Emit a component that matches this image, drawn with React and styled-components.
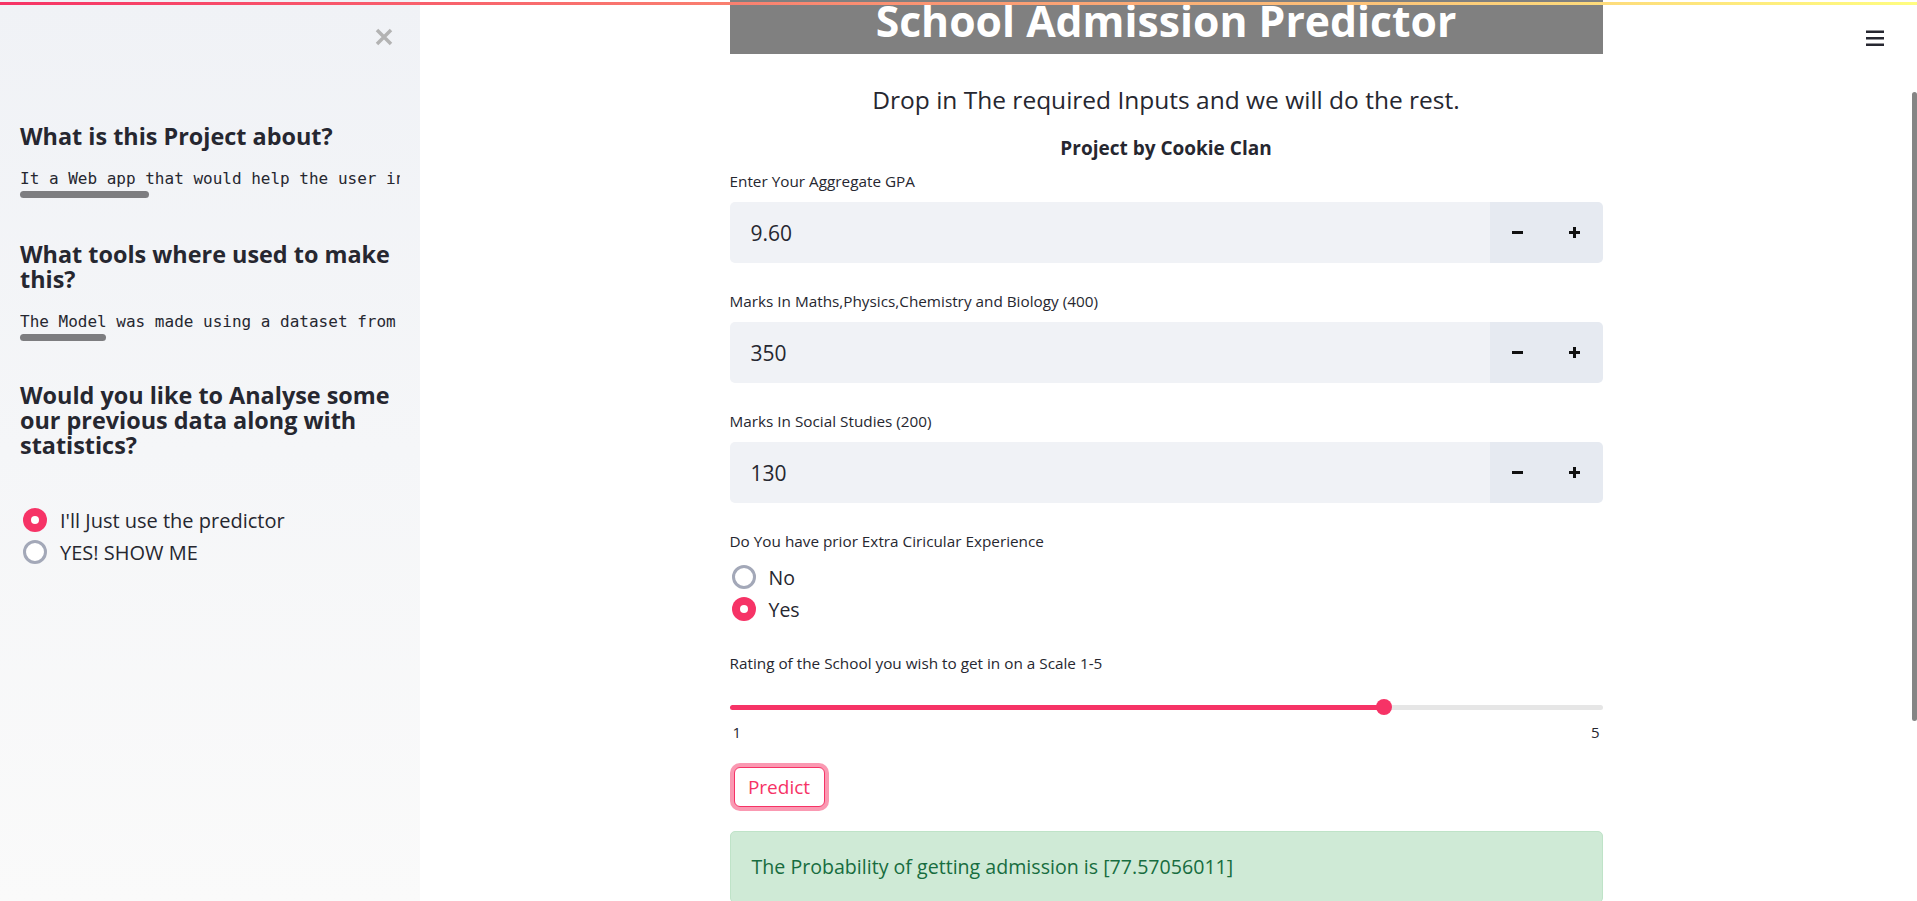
import React, { useState } from "react";
import styled, { createGlobalStyle } from "styled-components";

const GlobalStyle = createGlobalStyle`
  html, body {
    margin: 0;
    padding: 0;
    height: 100%;
    overflow: hidden;
    background: #ffffff;
  }
  body {
    font-family: "Open Sans", Roboto, "Liberation Sans", sans-serif;
    color: #262730;
  }
  * { box-sizing: border-box; }
  input, button { font-family: inherit; }
`;

const Page = styled.div`
  position: relative;
  display: flex;
  height: 100vh;
  overflow: hidden;
`;

const Decoration = styled.div`
  position: absolute;
  top: 2px;
  left: 0;
  right: 0;
  height: 3px;
  background-image: linear-gradient(90deg, #f63366, #fffd80);
  z-index: 5;
`;

/* ---------- sidebar ---------- */

const Sidebar = styled.aside`
  flex: 0 0 420px;
  width: 420px;
  min-width: 0;
  display: flex;
  flex-direction: column;
  padding: 28px 20px 0;
  background-image: linear-gradient(180deg, #f0f2f6, #fafafa);
`;

const CloseRow = styled.div`
  display: flex;
  justify-content: flex-end;
  padding-right: 7px;
  height: 18px;
`;

const SideHeading = styled.h2`
  margin: ${({ $top }) => $top}px 0 0;
  font-size: 23.4px;
  line-height: 25px;
  font-weight: 700;
  color: #262730;
`;

const Code = styled.pre`
  margin: 19px 0 0;
  min-width: 0;
  font-family: "DejaVu Sans Mono", "Liberation Mono", monospace;
  font-size: 16px;
  line-height: 22px;
  white-space: pre;
  overflow: hidden;
  color: #262730;
`;

const CodeThumb = styled.div`
  margin-top: 1px;
  height: 7px;
  width: ${({ $w }) => $w}px;
  border-radius: 4px;
  background: #7d7d80;
`;

/* ---------- main ---------- */

const Main = styled.main`
  position: relative;
  flex: 1;
  display: flex;
  min-width: 0;
`;

const MainBody = styled.div`
  flex: 1;
  display: flex;
  justify-content: center;
  align-items: flex-start;
  overflow: hidden;
`;

const Column = styled.div`
  flex: none;
  width: 873px;
  display: flex;
  flex-direction: column;
`;

const ScrollTrack = styled.div`
  flex: 0 0 5px;
`;

const ScrollThumb = styled.div`
  margin-top: 92px;
  height: 629px;
  background: #858585;
  border-radius: 3px;
`;

const MenuButton = styled.button`
  position: absolute;
  top: 30px;
  right: 33px;
  width: 18px;
  height: 16px;
  padding: 0;
  border: 0;
  background: transparent;
  cursor: pointer;
`;

const TitleBar = styled.h1`
  margin: 0;
  height: 54px;
  padding-bottom: 13px;
  background: #808080;
  color: #ffffff;
  text-align: center;
  font-size: 42.7px;
  line-height: 41px;
  font-weight: 700;
`;

const Subtitle = styled.p`
  margin: 31px 0 0;
  text-align: center;
  font-size: 24.5px;
  line-height: 30px;
`;

const Byline = styled.p`
  margin: 21px 0 0;
  text-align: center;
  font-size: 19px;
  line-height: 24px;
  font-weight: 700;
`;

const FieldLabel = styled.label`
  display: block;
  margin-top: ${({ $top }) => $top}px;
  font-size: 15.3px;
  line-height: 20px;
  color: #262730;
`;

const NumberBox = styled.div`
  margin-top: 11px;
  height: 61px;
  display: flex;
  border-radius: 5px;
  overflow: hidden;
`;

const NumberValue = styled.input`
  flex: 1;
  min-width: 0;
  border: 0;
  outline: none;
  background: #f0f2f6;
  padding: 0 0 0 21px;
  font-size: 21px;
  color: #262730;
`;

const Stepper = styled.div`
  flex: 0 0 113px;
  display: flex;
  background: #e6eaf1;
`;

const StepButton = styled.button`
  flex: 1;
  border: 0;
  padding: 0;
  background: transparent;
  display: flex;
  align-items: center;
  justify-content: center;
  cursor: pointer;
`;

const RadioList = styled.div`
  margin-top: ${({ $top }) => $top}px;
  padding-left: ${({ $inset }) => $inset}px;
  display: flex;
  flex-direction: column;
`;

const RadioRow = styled.label`
  display: flex;
  align-items: center;
  gap: 13px;
  height: 32px;
  font-size: ${({ $size }) => $size}px;
  color: #262730;
  cursor: pointer;
`;

const RadioDot = styled.span`
  flex: none;
  width: 24px;
  height: 24px;
  border-radius: 50%;
  display: flex;
  align-items: center;
  justify-content: center;
  background: ${({ $on }) => ($on ? "#f63366" : "#ffffff")};
  border: ${({ $on }) => ($on ? "none" : "3px solid #a3a8b8")};

  &::after {
    content: "";
    display: ${({ $on }) => ($on ? "block" : "none")};
    width: 8px;
    height: 8px;
    border-radius: 50%;
    background: #ffffff;
  }
`;

const SliderRow = styled.div`
  margin-top: 26px;
  height: 16px;
  display: flex;
  align-items: center;
`;

const SliderFill = styled.div`
  flex: none;
  height: 5px;
  background: #f63366;
  border-radius: 3px 0 0 3px;
`;

const SliderKnob = styled.div`
  position: relative;
  flex: none;
  width: 16px;
  height: 16px;
  margin: 0 -8px;
  border-radius: 50%;
  background: #f63366;
  z-index: 1;
`;

const SliderRest = styled.div`
  flex: 1;
  height: 5px;
  background: #e6e6e6;
  border-radius: 0 3px 3px 0;
`;

const TickRow = styled.div`
  margin-top: 7px;
  display: flex;
  justify-content: space-between;
  font-size: 15px;
  line-height: 20px;
  padding: 0 3px;
`;

const PredictButton = styled.button`
  align-self: flex-start;
  margin: 25px 0 0 4px;
  width: 91px;
  height: 40px;
  padding: 0;
  border: 1px solid #f63366;
  border-radius: 6px;
  background: #ffffff;
  color: #f63366;
  font-size: 19px;
  box-shadow: 0 0 0 4px rgba(246, 51, 102, 0.5);
  cursor: pointer;
`;

const SuccessBox = styled.div`
  margin-top: 24px;
  padding: 23px 21px;
  background: #cfead6;
  border: 1px solid #bfe3c8;
  border-radius: 5px;
  color: #176d3f;
  font-size: 19.6px;
  line-height: 24px;
`;

const CloseIcon = () => (
  <svg width="18" height="18" viewBox="0 0 18 18">
    <path d="M2 2 L16 16 M16 2 L2 16" stroke="#b3b3b3" strokeWidth="3.5" />
  </svg>
);

const MenuIcon = () => (
  <svg width="18" height="16" viewBox="0 0 18 16">
    <rect x="0" y="0.5" width="18" height="2.5" fill="#262730" />
    <rect x="0" y="7" width="18" height="2.5" fill="#262730" />
    <rect x="0" y="13.5" width="18" height="2.5" fill="#262730" />
  </svg>
);

const MinusIcon = () => (
  <svg width="11" height="11" viewBox="0 0 11 11">
    <rect x="0" y="4" width="11" height="3" fill="#111" />
  </svg>
);

const PlusIcon = () => (
  <svg width="11" height="11" viewBox="0 0 11 11">
    <rect x="0" y="4" width="11" height="3" fill="#111" />
    <rect x="4" y="0" width="3" height="11" fill="#111" />
  </svg>
);

const NumberField = ({ label, value, top }) => (
  <>
    <FieldLabel $top={top}>{label}</FieldLabel>
    <NumberBox>
      <NumberValue defaultValue={value} />
      <Stepper>
        <StepButton aria-label="decrement"><MinusIcon /></StepButton>
        <StepButton aria-label="increment"><PlusIcon /></StepButton>
      </Stepper>
    </NumberBox>
  </>
);

const Radios = ({ options, value, onChange, top, inset, size }) => (
  <RadioList $top={top} $inset={inset}>
    {options.map((o) => (
      <RadioRow key={o} $size={size} onClick={() => onChange(o)}>
        <RadioDot $on={value === o} />
        {o}
      </RadioRow>
    ))}
  </RadioList>
);

export default function App() {
  const [mode, setMode] = useState("I'll Just use the predictor");
  const [extra, setExtra] = useState("Yes");
  const rating = 4;
  const pct = ((rating - 1) / 4) * 100;

  return (
    <Page>
      <GlobalStyle />
      <Decoration />
      <Sidebar>
        <CloseRow><CloseIcon /></CloseRow>
        <SideHeading $top={78}>What is this Project about?</SideHeading>
        <Code>It a Web app that would help the user in</Code>
        <CodeThumb $w={129} />
        <SideHeading $top={44}>What tools where used to make<br />this?</SideHeading>
        <Code>The Model was made using a dataset from</Code>
        <CodeThumb $w={86} />
        <SideHeading $top={42}>
          Would you like to Analyse some<br />our previous data along with<br />statistics?
        </SideHeading>
        <Radios
          options={["I'll Just use the predictor", "YES! SHOW ME"]}
          value={mode}
          onChange={setMode}
          top={46}
          inset={3}
          size={20}
        />
      </Sidebar>

      <Main>
        <MainBody>
          <Column>
            <TitleBar>School Admission Predictor</TitleBar>
            <Subtitle>Drop in The required Inputs and we will do the rest.</Subtitle>
            <Byline>Project by Cookie Clan</Byline>
            <NumberField top={11} label="Enter Your Aggregate GPA" value="9.60" />
            <NumberField top={28} label="Marks In Maths,Physics,Chemistry and Biology (400)" value="350" />
            <NumberField top={28} label="Marks In Social Studies (200)" value="130" />
            <FieldLabel $top={28}>Do You have prior Extra Ciricular Experience</FieldLabel>
            <Radios options={["No", "Yes"]} value={extra} onChange={setExtra} top={10} inset={2} size={19.5} />
            <FieldLabel $top={28}>Rating of the School you wish to get in on a Scale 1-5</FieldLabel>
            <SliderRow>
              <SliderFill style={{ width: `${pct}%` }} />
              <SliderKnob />
              <SliderRest />
            </SliderRow>
            <TickRow>
              <span>1</span>
              <span>5</span>
            </TickRow>
            <PredictButton>Predict</PredictButton>
            <SuccessBox>The Probability of getting admission is [77.57056011]</SuccessBox>
          </Column>
        </MainBody>
        <ScrollTrack>
          <ScrollThumb />
        </ScrollTrack>
        <MenuButton aria-label="menu"><MenuIcon /></MenuButton>
      </Main>
    </Page>
  );
}
